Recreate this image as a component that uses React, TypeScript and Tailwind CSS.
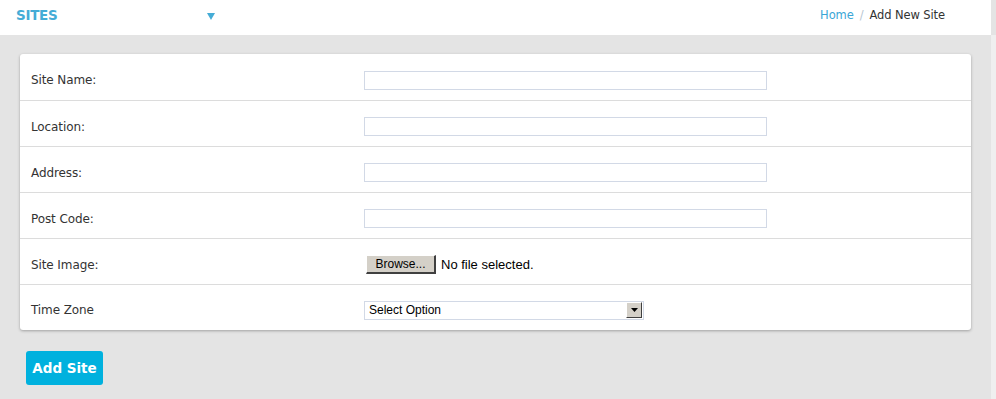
import React from "react";

const rows = ["Site Name:", "Location:", "Address:", "Post Code:"];

export default function App() {
  const font = { fontFamily: '"DejaVu Sans", "Noto Sans", sans-serif' };
  return (
    <div className="w-[996px] h-[399px] bg-[#e4e4e4] flex overflow-hidden" style={font}>
      <div className="w-[991px] flex flex-col">
        <div className="h-[35px] bg-white flex items-center justify-between pl-[16px] pr-[46px] pb-[4px] shrink-0">
          <div className="flex items-center">
            <span className="text-[13.5px] font-bold text-[#45acd6] tracking-[-0.3px] w-[191px]">SITES</span>
            <svg width="8" height="7" viewBox="0 0 8 7" className="mt-[1px]">
              <path d="M0 0 L8 0 L4 7 Z" fill="#45acd6" />
            </svg>
          </div>
          <div className="flex items-center text-[11.5px] tracking-[-0.1px]">
            <span className="text-[#3aa6d6]">Home</span>
            <span className="text-[#b8c6d2] mx-[6px]">/</span>
            <span className="text-[#333]">Add New Site</span>
          </div>
        </div>
        <div className="pl-[20px] pr-[20px] pt-[19px]">
          <div className="bg-white rounded-[3px] shadow-[0_1px_3px_rgba(0,0,0,0.3)] flex flex-col">
            {rows.map((r, i) => (
              <div key={r} className={`h-[46px] flex items-center pt-[6px] ${i > 0 ? "border-t border-[#dcdcdc]" : ""}`}>
                <span className="w-[344px] pl-[11px] text-[12px] text-[#333] tracking-[-0.1px]">{r}</span>
                <div className="w-[403px] h-[19px] border border-[#d2d9e6] bg-white" />
              </div>
            ))}
            <div className="h-[46px] flex items-center pt-[6px] border-t border-[#dcdcdc]">
              <span className="w-[344px] pl-[11px] text-[12px] text-[#333] tracking-[-0.1px]">Site Image:</span>
              <div className="flex items-center ml-[2px]" style={{ fontFamily: '"Liberation Sans", Arial, sans-serif' }}>
                <div className="w-[70px] h-[19px] bg-[#d4d0c8] border-r-2 border-b-2 border-[#404040] border-l border-t border-l-[#fff] border-t-[#fff] text-[12px] text-black flex items-center justify-center leading-none">
                  Browse...
                </div>
                <span className="ml-[5px] text-[13px] text-black">No file selected.</span>
              </div>
            </div>
            <div className="h-[46px] flex items-center pt-[5px] border-t border-[#dcdcdc]">
              <span className="w-[344px] pl-[11px] text-[12px] text-[#333] tracking-[-0.1px]">Time Zone</span>
              <div
                className="w-[280px] h-[19px] border border-[#d2d9e6] bg-white flex items-center justify-between"
                style={{ fontFamily: '"Liberation Sans", Arial, sans-serif' }}
              >
                <span className="pl-[4px] text-[12px] text-black leading-none">Select Option</span>
                <div className="w-[16px] h-[16px] bg-[#d4d0c8] border-r border-b border-[#404040] border-l border-t border-l-white border-t-white flex items-center justify-center mr-[1px]">
                  <svg width="7" height="4" viewBox="0 0 7 4">
                    <path d="M0 0 L7 0 L3.5 4 Z" fill="#000" />
                  </svg>
                </div>
              </div>
            </div>
          </div>
          <div className="mt-[21px] ml-[6px]">
            <button className="h-[34px] w-[77px] rounded-[3px] bg-[#00b1de] text-white text-[13.5px] font-bold flex items-center justify-center">
              Add Site
            </button>
          </div>
        </div>
      </div>
      <div className="w-[5px] bg-[#efefef] mt-[35px]" />
    </div>
  );
}
